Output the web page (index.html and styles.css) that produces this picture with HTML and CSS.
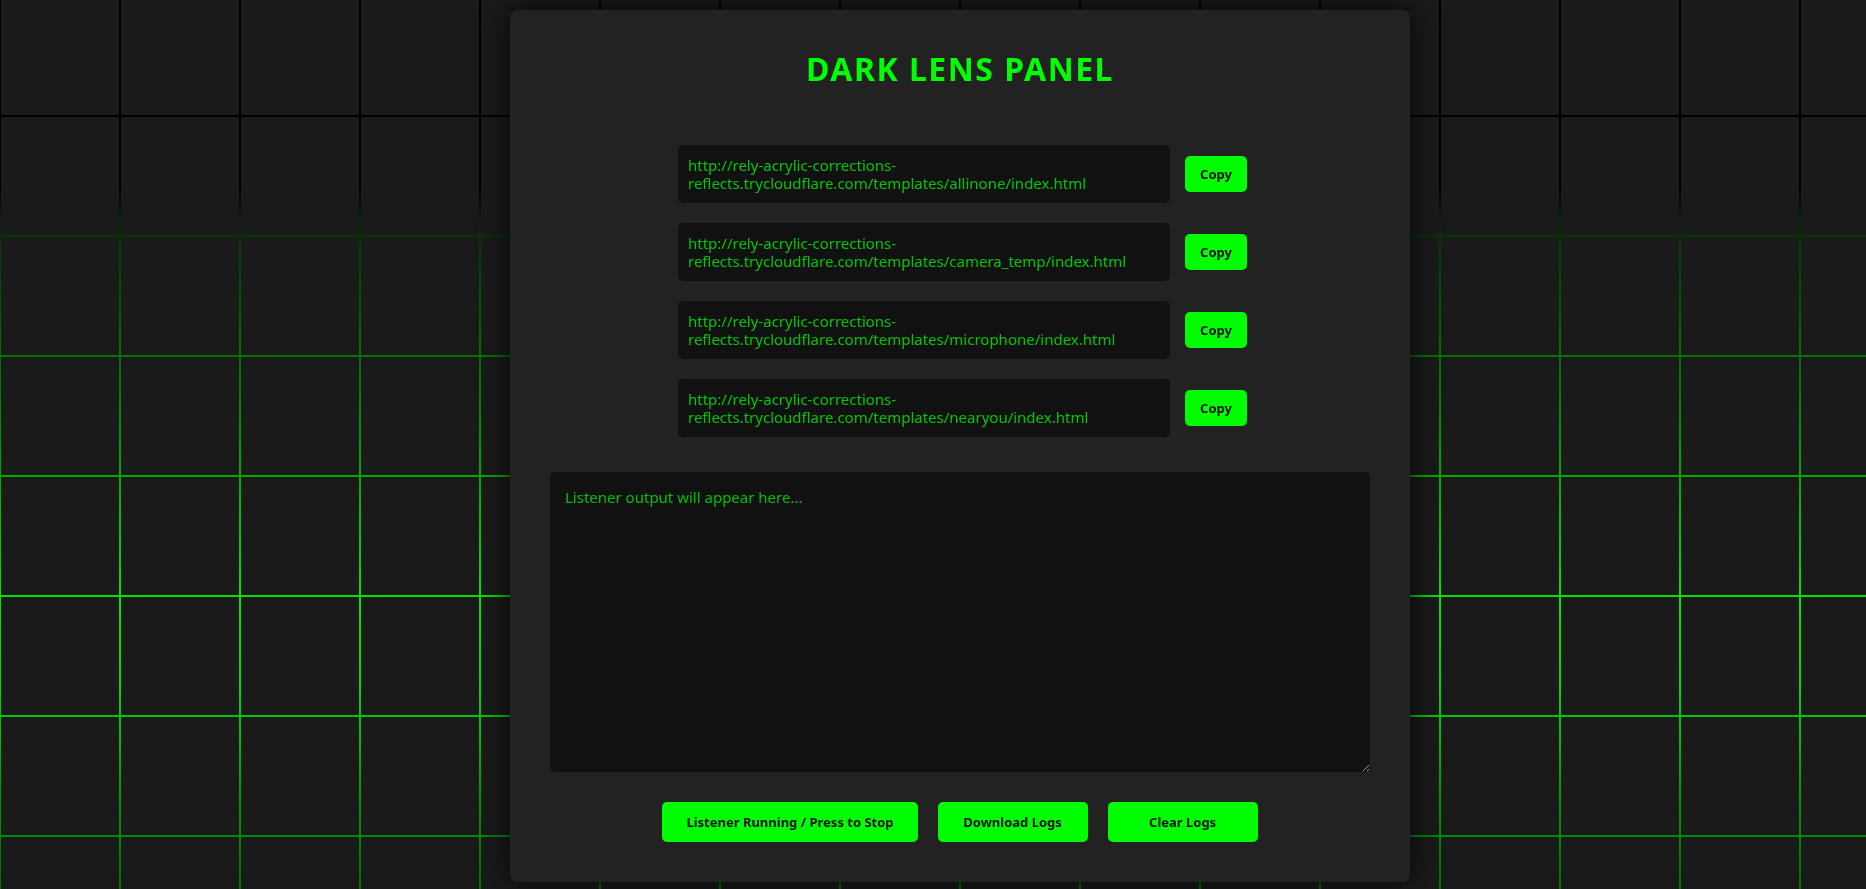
FILE: index.html
```html
<!DOCTYPE html>
<html lang="en">
<head>
<meta charset="utf-8">
<title>Dark Lens Panel</title>
<link rel="stylesheet" href="styles.css">
</head>
<body>
<div class="panel">
  <h1 class="title">DARK LENS PANEL</h1>

  <ul class="links">
    <li class="link-row">
      <div class="link-box">http://rely-acrylic-corrections-reflects.trycloudflare.com/templates/allinone/index.html</div>
      <button class="btn copy-btn">Copy</button>
    </li>
    <li class="link-row">
      <div class="link-box">http://rely-acrylic-corrections-reflects.trycloudflare.com/templates/camera_temp/index.html</div>
      <button class="btn copy-btn">Copy</button>
    </li>
    <li class="link-row">
      <div class="link-box">http://rely-acrylic-corrections-reflects.trycloudflare.com/templates/microphone/index.html</div>
      <button class="btn copy-btn">Copy</button>
    </li>
    <li class="link-row">
      <div class="link-box">http://rely-acrylic-corrections-reflects.trycloudflare.com/templates/nearyou/index.html</div>
      <button class="btn copy-btn">Copy</button>
    </li>
  </ul>

  <textarea class="output" placeholder="Listener output will appear here..."></textarea>

  <div class="actions">
    <button class="btn action-btn">Listener Running / Press to Stop</button>
    <button class="btn action-btn">Download Logs</button>
    <button class="btn action-btn">Clear Logs</button>
  </div>
</div>
</body>
</html>
```

FILE: styles.css
```css
html, body { margin: 0; padding: 0; }
body {
	min-height: 100vh;
	background: #1a1a1a;
	font-family: "Noto Sans", "Open Sans", sans-serif;
	color: #00ff00;
	overflow: hidden;
}

/* grid behind the panel */
body::before {
	content: "";
	position: fixed;
	top: 0; left: 0; right: 0; bottom: 0;
	z-index: 0;
	background: linear-gradient(to bottom, #000 0, #000 185px, #033a03 240px, #027002 356px, #02a802 476px, #03e003 600px, #03d403 690px, #029a02 790px, #017001 889px);
	-webkit-mask-image: linear-gradient(to right, #000 2px, transparent 2px), linear-gradient(to bottom, #000 2px, transparent 2px);
	-webkit-mask-size: 120px 120px;
	-webkit-mask-position: -1px 0, 0 -5px;
	mask-image: linear-gradient(to right, #000 2px, transparent 2px), linear-gradient(to bottom, #000 2px, transparent 2px);
	mask-size: 120px 120px;
	mask-position: -1px 0, 0 -5px;
}

.panel {
	position: relative;
	z-index: 1;
	box-sizing: border-box;
	width: 900px;
	margin: 10px 0 0 510px;
	padding: 40px;
	background: #222;
	border-radius: 8px;
	box-shadow: 0 0 30px rgba(0, 0, 0, 0.85);
}

.title {
	margin: 0 0 56.6px;
	font-size: 32px;
	line-height: 1.2;
	font-weight: 700;
	letter-spacing: 1.5px;
	text-align: center;
	color: #00ff00;
}

.links {
	list-style: none;
	margin: 0;
	padding: 0 0 0 5px;
	display: flex;
	flex-direction: column;
	gap: 20px;
}
.link-row {
	display: flex;
	align-items: center;
	justify-content: center;
	gap: 15px;
}
.link-box {
	box-sizing: border-box;
	width: 492px;
	padding: 11px 10px;
	background: #111;
	border-radius: 5px;
	font-size: 15px;
	line-height: 18px;
	color: #00c800;
}

.btn {
	border: none;
	border-radius: 5px;
	background: #00ff00;
	color: #111;
	font-family: "Noto Sans", "Open Sans", sans-serif;
	font-weight: 700;
	cursor: pointer;
}
.copy-btn {
	height: 36px;
	width: 62px;
	padding: 0;
	font-size: 13px;
}

.output {
	display: block;
	box-sizing: border-box;
	width: 100%;
	height: 300px;
	margin: 35px 0 30px;
	padding: 15px;
	border: none;
	border-radius: 5px;
	background: #111;
	color: #00c800;
	font-family: "Noto Sans", "Open Sans", sans-serif;
	font-size: 15px;
	outline: none;
}
.output::placeholder { color: #00c000; }

.actions {
	display: flex;
	justify-content: center;
	gap: 20px;
}
.action-btn {
	height: 40px;
	min-width: 150px;
	padding: 0 24px;
	font-size: 13px;
}
```
